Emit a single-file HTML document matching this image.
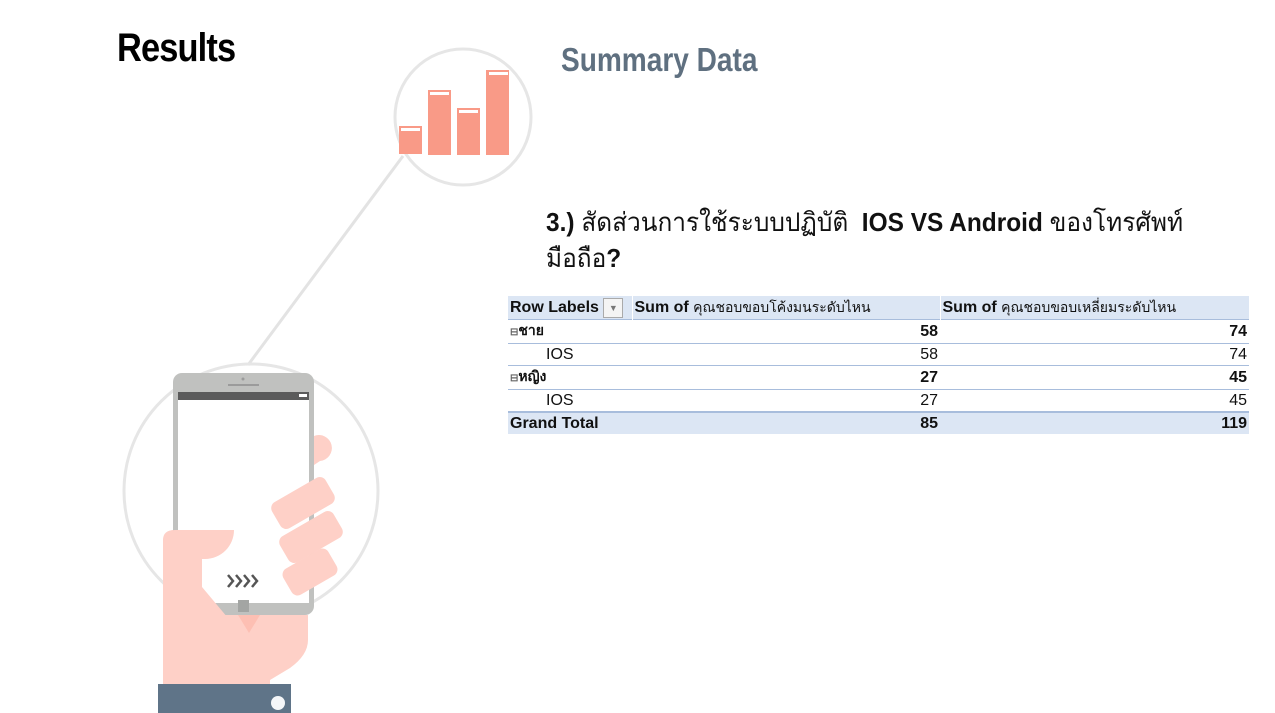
<!DOCTYPE html>
<html><head><meta charset="utf-8"><style>
body{margin:0;width:1275px;height:713px;background:#fff;position:relative;overflow:hidden;font-family:"Liberation Sans","Noto Sans CJK SC",sans-serif}
.abs{position:absolute}
.cond{font-family:"Liberation Sans","Noto Sans CJK SC",sans-serif;font-weight:bold;transform-origin:0 0;white-space:nowrap}
table{border-collapse:collapse;font-size:16px;color:#111;table-layout:fixed}
td{height:21px;padding:0 2px;line-height:21px;white-space:nowrap;overflow:hidden}
td span.th{display:inline-block;line-height:21px;vertical-align:top;font-weight:normal;font-size:14px}
.r{text-align:right}
.b{font-weight:bold}
.sep td{border-bottom:1px solid #a8bddc}
</style></head><body>
<div class="abs cond" style="left:117px;top:26px;font-size:40px;letter-spacing:-1px;color:#000;transform:scaleX(0.86)">Results</div>
<div class="abs cond" style="left:561px;top:41px;font-size:33px;color:#5f7080;transform:scaleX(0.85)">Summary Data</div>
<div class="abs cond" style="left:546px;top:204px;font-size:26px;line-height:36px;color:#111;transform:scaleX(0.94)">3.) <span style="font-weight:normal">สัดส่วนการใช้ระบบปฏิบัติ</span>&nbsp; IOS VS Android <span style="font-weight:normal">ของโทรศัพท์</span><br><span style="font-weight:normal">มือถือ</span>?</div>

<svg class="abs" style="left:0;top:0" width="560" height="713">
<line x1="248" y1="365" x2="403" y2="156" stroke="#e3e3e3" stroke-width="3"/>
<circle cx="463" cy="117" r="68" fill="none" stroke="#e6e6e6" stroke-width="3"/>
<g fill="#f99a87">
<rect x="399" y="126" width="23" height="28"/><rect x="428" y="90" width="23" height="65"/><rect x="457" y="108" width="23" height="47"/><rect x="486" y="70" width="23" height="85"/></g>
<g fill="#fff"><rect x="401" y="128" width="19" height="3"/><rect x="430" y="92" width="19" height="3"/><rect x="459" y="110" width="19" height="3"/><rect x="489" y="72" width="19" height="3"/></g>
<circle cx="251" cy="491" r="127" fill="none" stroke="#e6e6e6" stroke-width="3"/>
<path d="M163 540 Q163 530 175 530 H300 V615 H308 V640 Q308 655 290 668 L270 680 V684 H163 Z" fill="#fed0c7"/>
<rect x="173" y="373" width="141" height="242" rx="9" fill="#c0c1bf"/>
<rect x="178" y="392" width="131" height="211" fill="#fff"/>
<rect x="178" y="392" width="131" height="8" fill="#5b5b5b"/>
<rect x="299" y="394" width="8" height="3" fill="#fff"/>
<rect x="228" y="384" width="31" height="2" fill="#9b9b9b"/>
<circle cx="243" cy="379" r="1.5" fill="#9b9b9b"/>
<rect x="238" y="600" width="11" height="12" fill="#a3a5a3"/>
<path d="M238 615 h22 l-11 18z" fill="#fdbfb3"/>
<g fill="#fed0c7">
<path d="M314 436 a13 13 0 1 1 6 25 l-6 4z"/>
<rect x="272" y="488" width="62" height="30" rx="7" transform="rotate(-30 303 503)"/>
<rect x="280" y="522" width="62" height="30" rx="7" transform="rotate(-30 311 537)"/>
<rect x="284" y="557" width="52" height="30" rx="7" transform="rotate(-30 310 572)"/>
<path d="M163 542 Q163 530 175 530 H234 A29 29 0 0 1 205 559 H202 V587 L238 630 L163 645 Z"/>
</g>
<g fill="none" stroke="#555" stroke-width="2.5"><path d="M228 575 l5 6 -5 6M236 575 l5 6 -5 6M244 575 l5 6 -5 6M252 575 l5 6 -5 6"/></g>
<rect x="158" y="684" width="133" height="29" fill="#5f7488"/>
<circle cx="278" cy="703" r="7" fill="#f4f6f8"/>
</svg>

<table class="abs" style="left:508px;top:296px;width:741px">
<colgroup><col style="width:124px"><col style="width:308px"><col></colgroup>
<tr style="background:#dce6f4" class="b"><td style="border-right:1px solid #fff;height:23px">Row Labels <span style="display:inline-block;width:18px;height:18px;border:1px solid #aaa;background:#f4f4f4;font-size:9px;text-align:center;line-height:18px;color:#777;vertical-align:middle">▼</span></td><td style="border-right:1px solid #fff">Sum of <span class="th">คุณชอบขอบโค้งมนระดับไหน</span></td><td>Sum of <span class="th">คุณชอบขอบเหลี่ยมระดับไหน</span></td></tr>
<tr class="sep b" style="border-top:1px solid #a8bddc"><td><span style="font-size:10px;color:#666">⊟</span><span class="th" style="font-weight:bold">ชาย</span></td><td class="r">58</td><td class="r">74</td></tr>
<tr class="sep"><td style="padding-left:38px">IOS</td><td class="r">58</td><td class="r">74</td></tr>
<tr class="sep b"><td><span style="font-size:10px;color:#666">⊟</span><span class="th" style="font-weight:bold">หญิง</span></td><td class="r">27</td><td class="r">45</td></tr>
<tr><td style="padding-left:38px">IOS</td><td class="r">27</td><td class="r">45</td></tr>
<tr class="b" style="background:#dce6f4;border-top:2px solid #a8bddc"><td>Grand Total</td><td class="r">85</td><td class="r">119</td></tr>
</table>
</body></html>
